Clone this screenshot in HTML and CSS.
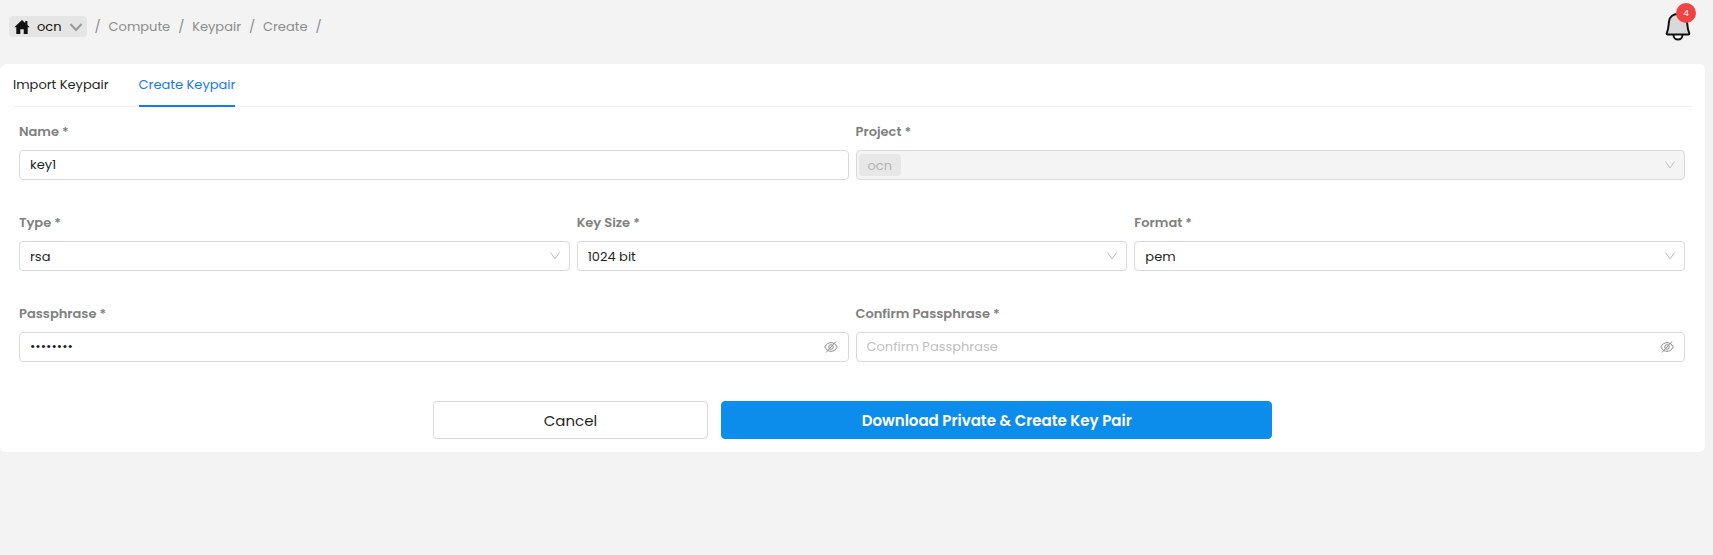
FILE: index.html
```html
<!DOCTYPE html>
<html lang="en">

<head>
    <meta charset="utf-8">
    <title>Create Keypair</title>
    <meta name="viewport" content="width=device-width, initial-scale=1">

    <link rel="stylesheet" href="styles.css">
</head>

<body>
    <header class="topbar">
        <nav class="breadcrumb" aria-label="Breadcrumb">
            <button class="project-switch" type="button">
                <svg width="16" height="14" viewBox="0 0 16 14"><path d="M8 0 0.300 7.200H2.300V14H6.300V9.200H9.700V14H13.700V7.200H15.700L13.400 5.100V1H11.200V3Z" fill="#111" /></svg>
                <span>ocn</span>
                <svg width="14" height="10" viewBox="0 0 14 10"><path d="M1.500 2 7 8 12.500 2" fill="none" stroke="#999" stroke-width="2" /></svg>
            </button>
            <span class="sep">/</span>
            <a href="#compute">Compute</a>
            <span class="sep">/</span>
            <a href="#keypair">Keypair</a>
            <span class="sep">/</span>
            <a href="#create">Create</a>
            <span class="sep">/</span>
        </nav>
        <button class="bell" type="button" aria-label="Notifications">
            <svg width="26" height="30" viewBox="0 0 26 30">
                <path d="M8.500 23A4.500 4.500 0 0 0 17.500 23" fill="#fff" stroke="#111" stroke-width="2" />
                <path d="M2.500 22.500C1.500 22.500 1.500 21.500 2 20.500C3.500 17 3.500 14 4 9.500C4.500 5 8 2 13 2S21.500 5 22 9.500C22.500 14 22.500 17 24 20.500C24.500 21.500 24.500 22.500 23.500 22.500Z" fill="#d9d9d9" stroke="#111" stroke-width="2" />
            </svg>
            <span class="badge">4</span>
        </button>
    </header>

    <main class="card">
        <div class="tabs" role="tablist">
            <button class="tab" type="button" role="tab">Import Keypair</button>
            <button class="tab active" type="button" role="tab" aria-selected="true">Create Keypair</button>
        </div>

        <form class="keypair-form">
            <div class="form-row">
                <div class="field">
                    <label for="name">Name *</label>
                    <div class="control"><input id="name" type="text" value="key1"></div>
                </div>
                <div class="field">
                    <label for="project">Project *</label>
                    <div class="control disabled">
                        <select id="project" disabled>
                            <option>ocn</option>
                        </select>
                        <svg class="arrow" width="12" height="10" viewBox="0 0 12 10"><path d="M1.500 1.500 6 8 10.500 1.500" /></svg>
                    </div>
                </div>
            </div>

            <div class="form-row">
                <div class="field">
                    <label for="type">Type *</label>
                    <div class="control">
                        <select id="type">
                            <option>rsa</option>
                        </select>
                        <svg class="arrow" width="12" height="10" viewBox="0 0 12 10"><path d="M1.500 1.500 6 8 10.500 1.500" /></svg>
                    </div>
                </div>
                <div class="field">
                    <label for="keySize">Key Size *</label>
                    <div class="control">
                        <select id="keySize">
                            <option>1024 bit</option>
                        </select>
                        <svg class="arrow" width="12" height="10" viewBox="0 0 12 10"><path d="M1.500 1.500 6 8 10.500 1.500" /></svg>
                    </div>
                </div>
                <div class="field">
                    <label for="format">Format *</label>
                    <div class="control">
                        <select id="format">
                            <option>pem</option>
                        </select>
                        <svg class="arrow" width="12" height="10" viewBox="0 0 12 10"><path d="M1.500 1.500 6 8 10.500 1.500" /></svg>
                    </div>
                </div>
            </div>

            <div class="form-row">
                <div class="field">
                    <label for="passphrase">Passphrase *</label>
                    <div class="control">
                        <input id="passphrase" type="password" value="password">
                        <button class="eye" type="button" aria-label="Show passphrase">
                            <svg width="14" height="14" viewBox="0 0 14 14"><path d="M0.800 7C3.500 1.200 10.500 1.200 13.200 7C10.500 12.800 3.500 12.800 0.800 7ZM12 1.500 2 12.500" /><circle cx="7" cy="7" r="2.300" /></svg>
                        </button>
                    </div>
                </div>
                <div class="field">
                    <label for="confirm">Confirm Passphrase *</label>
                    <div class="control">
                        <input id="confirm" type="password" placeholder="Confirm Passphrase">
                        <button class="eye" type="button" aria-label="Show confirmation">
                            <svg width="14" height="14" viewBox="0 0 14 14"><path d="M0.800 7C3.500 1.200 10.500 1.200 13.200 7C10.500 12.800 3.500 12.800 0.800 7ZM12 1.500 2 12.500" /><circle cx="7" cy="7" r="2.300" /></svg>
                        </button>
                    </div>
                </div>
            </div>
        </form>

        <div class="actions">
            <button class="btn" type="button">Cancel</button>
            <button class="btn primary" type="button">Download Private &amp; Create Key Pair</button>
        </div>
    </main>
</body>

</html>
```

FILE: styles.css
```css
* {
    box-sizing: border-box;
}

body {
    margin: 0;
    background-color: #f3f3f3;
    color: #1f1f1f;
    font-family: Poppins, Inter, sans-serif;
    font-size: 13px;
}

button,
input,
select {
    font: inherit;
    color: inherit;
}

button {
    padding: 0;
    border: 0;
    background: none;
}

svg {
    display: block;
}

.topbar {
    display: flex;
    justify-content: space-between;
    align-items: flex-start;
    height: 64px;
    padding: 12px 22px 0 9px;
}

.breadcrumb {
    display: flex;
    align-items: center;
    gap: 8px;
    padding-top: 4px;
    color: #8c8c8c;
}

.breadcrumb a {
    color: inherit;
    text-decoration: none;
}

.sep {
    width: 6px;
}

.project-switch {
    display: flex;
    align-items: center;
    gap: 7px;
    height: 21px;
    padding: 0 4px 0 5px;
    border-radius: 4px;
    background-color: #e5e5e5;
    color: #111;
}

.bell {
    position: relative;
}

.badge {
    position: absolute;
    top: -9px;
    right: -5px;
    width: 20px;
    height: 20px;
    border-radius: 50%;
    background-color: #f04444;
    color: #fff;
    font-size: 9px;
    line-height: 20px;
    text-align: center;
}

.card {
    margin-right: 8px;
    padding: 0 13px 13px;
    border-radius: 6px;
    background-color: #fff;
}

.tabs {
    display: flex;
    gap: 30px;
    height: 43px;
    border-bottom: 1px solid #f0f0f0;
}

.tab {
    height: 43px;
    border-bottom: 2px solid transparent;
}

.tab.active {
    border-color: #1677ff;
    color: #1677ff;
}

.keypair-form {
    padding: 14px 7px 0 6px;
}

.form-row {
    display: flex;
    gap: 7px;
    margin-bottom: 32px;
}

.form-row:last-child {
    margin-bottom: 0;
}

.field {
    flex: 1;
}

.field label {
    display: block;
    margin-bottom: 8px;
    color: #808080;
    font-weight: 600;
    line-height: 21px;
}

.control {
    display: flex;
    align-items: center;
    position: relative;
    height: 30px;
    border: 1px solid #d9d9d9;
    border-radius: 4px;
}

.control input,
.control select {
    flex: 1;
    height: 28px;
    padding: 0 10px;
    border: 0;
    outline: 0;
    background: none;
    appearance: none;
}

.control input::placeholder {
    color: #bfbfbf;
}

.control.disabled {
    background-color: #f4f4f4;
}

/* tag behind the selected project */
.control.disabled::before {
    content: "";
    position: absolute;
    left: 2px;
    width: 42px;
    height: 22px;
    border-radius: 4px;
    background-color: #e7e7e7;
}

.control.disabled select {
    position: relative;
    padding-left: 11px;
    color: #b3b3b3;
    opacity: 1;
}

.arrow {
    position: absolute;
    right: 8px;
    fill: none;
    stroke: #bfbfbf;
    pointer-events: none;
}

.eye {
    margin-right: 10px;
}

.eye svg {
    fill: none;
    stroke: #8c8c8c;
}

.actions {
    display: grid;
    grid-template-columns: 1fr 2fr;
    gap: 13px;
    width: 50%;
    margin: 39px auto 0;
}

.btn {
    height: 38px;
    border: 1px solid #d9d9d9;
    border-radius: 4px;
    font-size: 15px;
}

.btn.primary {
    border-color: #0d8deb;
    background-color: #0d8deb;
    color: #fff;
    font-weight: 600;
}
```
